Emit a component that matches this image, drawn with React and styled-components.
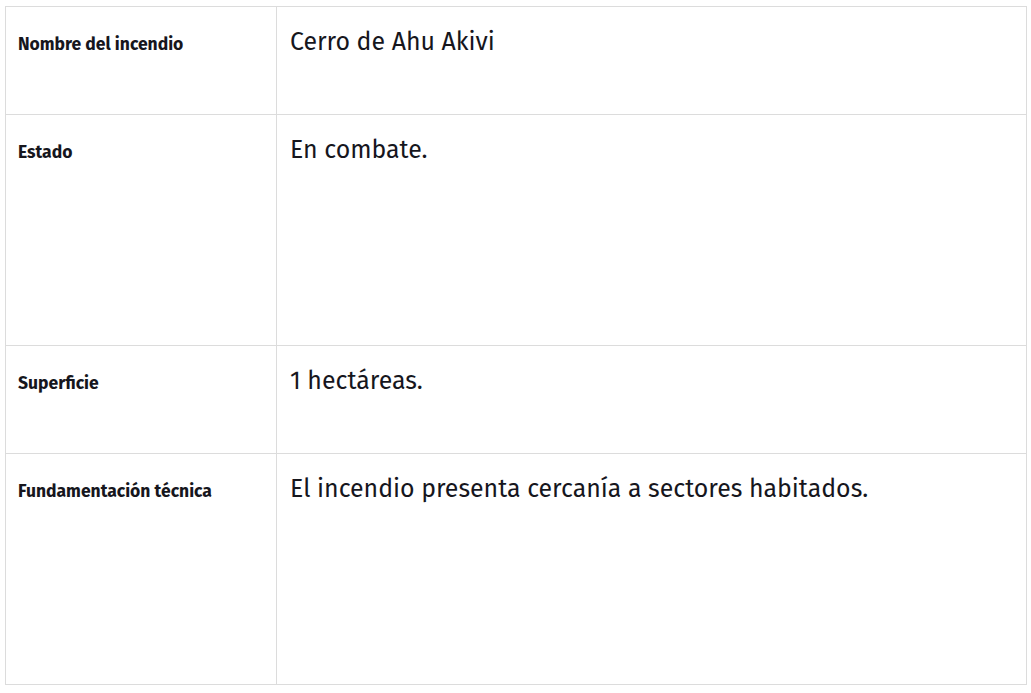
import React from "react";
import styled, { createGlobalStyle } from "styled-components";

const GlobalStyle = createGlobalStyle`
  body {
    margin: 0;
    background: #fff;
    font-family: "Fira Sans", "Noto Sans", sans-serif;
    color: #111;
  }
`;

const Page = styled.div`
  padding: 6px 5px;
`;

const Table = styled.div`
  width: 1021px;
  display: grid;
  grid-template-columns: 271px 1fr;
  border-top: 1px solid #dcdcdc;
  border-left: 1px solid #dcdcdc;
`;

const Label = styled.div`
  height: ${(p) => p.h}px;
  box-sizing: border-box;
  padding: 27px 0 0 12px;
  font-size: 17.5px;
  font-weight: 700;
  color: #16161d;
  border-right: 1px solid #dcdcdc;
  border-bottom: 1px solid #dcdcdc;
`;

const Value = styled.div`
  height: ${(p) => p.h}px;
  box-sizing: border-box;
  padding: 20px 0 0 13px;
  font-size: 24.9px;
  color: #16161d;
  border-right: 1px solid #dcdcdc;
  border-bottom: 1px solid #dcdcdc;
`;

const rows = [
  { label: "Nombre del incendio", value: "Cerro de Ahu Akivi", h: 108 },
  { label: "Estado", value: "En combate.", h: 231 },
  { label: "Superficie", value: "1 hectáreas.", h: 108 },
  {
    label: "Fundamentación técnica",
    value: "El incendio presenta cercanía a sectores habitados.",
    h: 231,
  },
];

export default function App() {
  return (
    <Page>
      <GlobalStyle />
      <Table>
        {rows.map((r) => (
          <React.Fragment key={r.label}>
            <Label h={r.h}>{r.label}</Label>
            <Value h={r.h}>{r.value}</Value>
          </React.Fragment>
        ))}
      </Table>
    </Page>
  );
}
